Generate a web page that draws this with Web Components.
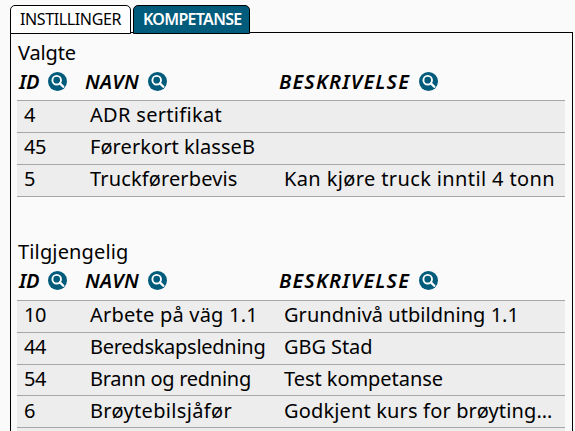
<!DOCTYPE html>
<html lang="no">
<head>
<meta charset="utf-8">
<title>Kompetanse</title>
<style>
    html
    {
        height: 100%;
        overflow: hidden;
        background-color: #fafafa;
    }

    body
    {
        margin: 0;
        height: 100%;
        overflow: hidden;
        color: #000;
        font-family: "Trebuchet MS", "Noto Sans", sans-serif;
        font-size: 20px;
        --accent: #015b7b;
        --line: #a6a6a6;
        --row: #ededed;
    }
</style>
</head>
<body>
<tab-panel>
    <tab-item slot="tab"><fit-text width="101">INSTILLINGER</fit-text></tab-item>
    <tab-item slot="tab" active><fit-text width="98.5">KOMPETANSE</fit-text></tab-item>

    <data-table>
        <fit-text slot="title" width="58">Valgte</fit-text>
        <column-head><fit-text width="20">ID</fit-text></column-head>
        <column-head><fit-text width="54">NAVN</fit-text></column-head>
        <column-head><fit-text width="131">BESKRIVELSE</fit-text></column-head>
        <data-row slot="row">
            <fit-text slot="id" width="11">4</fit-text>
            <fit-text slot="name" width="132">ADR sertifikat</fit-text>
        </data-row>
        <data-row slot="row">
            <fit-text slot="id" width="22">45</fit-text>
            <fit-text slot="name" width="165">Førerkort klasseB</fit-text>
        </data-row>
        <data-row slot="row">
            <fit-text slot="id" width="11">5</fit-text>
            <fit-text slot="name" width="147.5">Truckførerbevis</fit-text>
            <fit-text slot="text" width="271">Kan kjøre truck inntil 4 tonn</fit-text>
        </data-row>
    </data-table>

    <data-table compact>
        <fit-text slot="title" width="110.5">Tilgjengelig</fit-text>
        <column-head><fit-text width="20">ID</fit-text></column-head>
        <column-head><fit-text width="54">NAVN</fit-text></column-head>
        <column-head><fit-text width="131">BESKRIVELSE</fit-text></column-head>
        <data-row slot="row">
            <fit-text slot="id" width="22">10</fit-text>
            <fit-text slot="name" width="168">Arbete på väg 1.1</fit-text>
            <fit-text slot="text" width="235">Grundnivå utbildning 1.1</fit-text>
        </data-row>
        <data-row slot="row">
            <fit-text slot="id" width="22">44</fit-text>
            <fit-text slot="name" width="175.5">Beredskapsledning</fit-text>
            <fit-text slot="text" width="88.5">GBG Stad</fit-text>
        </data-row>
        <data-row slot="row" short>
            <fit-text slot="id" width="22">54</fit-text>
            <fit-text slot="name" width="161">Brann og redning</fit-text>
            <fit-text slot="text" width="159">Test kompetanse</fit-text>
        </data-row>
        <data-row slot="row" low>
            <fit-text slot="id" width="11">6</fit-text>
            <fit-text slot="name" width="142">Brøytebilsjåfør</fit-text>
            <fit-text slot="text" width="268.5">Godkjent kurs for brøyting…</fit-text>
        </data-row>
    </data-table>
</tab-panel>

<script>
// TEMPLATES
function template(html) {
    const element = document.createElement('template');
    element.innerHTML = html;
    return element;
}

const fitTextTemplate = template(`<style>
        :host
        {
            display: inline-block;
            white-space: nowrap;
        }
    </style><span><slot></slot></span>`);

const tabPanelTemplate = template(`
    <style>
        :host
        {
            display: flex;
            flex-direction: column;
            box-sizing: border-box;
            width: 573px;
            height: 100%;
            padding: 5px 0 0 10px;
        }

        .tabs
        {
            display: flex;
            gap: 2px;
            height: 29px;
            margin-bottom: -2px;
            position: relative;
        }

        .content
        {
            display: flex;
            flex-direction: column;
            flex: 1;
            min-height: 0;
            padding: 7px 7px 0 6px;
            border: 1px solid #000;
            border-bottom: none;
        }
    </style>
    <div class="tabs"><slot name="tab"></slot></div>
    <div class="content"><slot></slot></div>
`);

const tabItemTemplate = template(`
    <style>
        :host
        {
            display: block;
            box-sizing: border-box;
            width: 121px;
            height: 29px;
            padding-left: 9px;
            border: 1px solid #000;
            border-radius: 5px 5px 0 0;
            background-color: #fff;
            font-size: 16px;
            line-height: 26px;
        }

        :host([active])
        {
            width: 117px;
            background-color: var(--accent);
            color: #fff;
            font-weight: 600;
        }
    </style>
    <slot></slot>
`);

const dataTableTemplate = template(`
    <style>
        :host
        {
            display: flex;
            flex-direction: column;
            flex: none;
            height: 200px;
        }

        :host([compact])
        {
            flex: 1;
        }

        .title
        {
            height: 26px;
            padding-left: 1px;
            line-height: 25px;
        }

        .head
        {
            display: grid;
            grid-template-columns: 66px 194px 1fr;
            height: 34px;
            padding-left: 2px;
            border-bottom: 1px solid var(--line);
        }

        :host([compact]) .title
        {
            height: 25px;
            line-height: 23px;
        }

        :host([compact]) .head
        {
            height: 35px;
        }

        /* start of the next row */
        .rest
        {
            display: none;
            flex: 1;
            background-color: var(--row);
        }

        :host([compact]) .rest
        {
            display: block;
        }
    </style>
    <div class="title"><slot name="title"></slot></div>
    <div class="head"><slot></slot></div>
    <slot name="row"></slot>
    <div class="rest"></div>
`);

const columnHeadTemplate = template(`
    <style>
        :host
        {
            display: flex;
            align-items: flex-start;
            gap: 9px;
            font-weight: 600;
            font-style: italic;
            line-height: 31px;
        }

        svg
        {
            flex: none;
            width: 19px;
            height: 19px;
            margin-top: 6px;
        }
    </style>
    <slot></slot>
    <svg viewBox="0 0 19 19">
        <circle cx="9.5" cy="9.5" r="9.5" fill="#015b7b"/>
        <circle cx="8.7" cy="8.2" r="4.3" fill="none" stroke="#fff" stroke-width="1.9"/>
        <path d="M11.9 11.4L15.3 14.8" stroke="#fff" stroke-width="2.3" stroke-linecap="round"/>
    </svg>
`);

const dataRowTemplate = template(`
    <style>
        :host
        {
            display: grid;
            grid-template-columns: 66px 194px 1fr;
            box-sizing: border-box;
            height: 32px;
            padding-left: 7px;
            border-bottom: 1px solid var(--line);
            background-color: var(--row);
            line-height: 27px;
        }

        :host([short])
        {
            height: 31px;
        }

        :host([low])
        {
            line-height: 29px;
        }
    </style>
    <div><slot name="id"></slot></div>
    <div><slot name="name"></slot></div>
    <div><slot name="text"></slot></div>
`);


// ELEMENTS
class BaseElement extends HTMLElement {
    constructor(source) {
        super();
        this.attachShadow({ mode: 'open' }).appendChild(source.content.cloneNode(true));
    }
}

class TabPanel extends BaseElement {
    constructor() { super(tabPanelTemplate); }
}

class TabItem extends BaseElement {
    constructor() { super(tabItemTemplate); }
}

class DataTable extends BaseElement {
    constructor() { super(dataTableTemplate); }
}

class ColumnHead extends BaseElement {
    constructor() { super(columnHeadTemplate); }
}

class DataRow extends BaseElement {
    constructor() { super(dataRowTemplate); }
}

// spreads its letters over the given width
class FitText extends BaseElement {
    constructor() { super(fitTextTemplate); }

    connectedCallback() {
        const width = parseFloat(this.getAttribute('width'));
        const span = this.shadowRoot.querySelector('span');
        const spacing = (width - span.getBoundingClientRect().width) / this.textContent.length;
        span.style.letterSpacing = spacing.toFixed(3) + 'px';
    }
}

customElements.define('tab-panel', TabPanel);
customElements.define('tab-item', TabItem);
customElements.define('data-table', DataTable);
customElements.define('column-head', ColumnHead);
customElements.define('data-row', DataRow);
customElements.define('fit-text', FitText);
</script>
</body>
</html>
